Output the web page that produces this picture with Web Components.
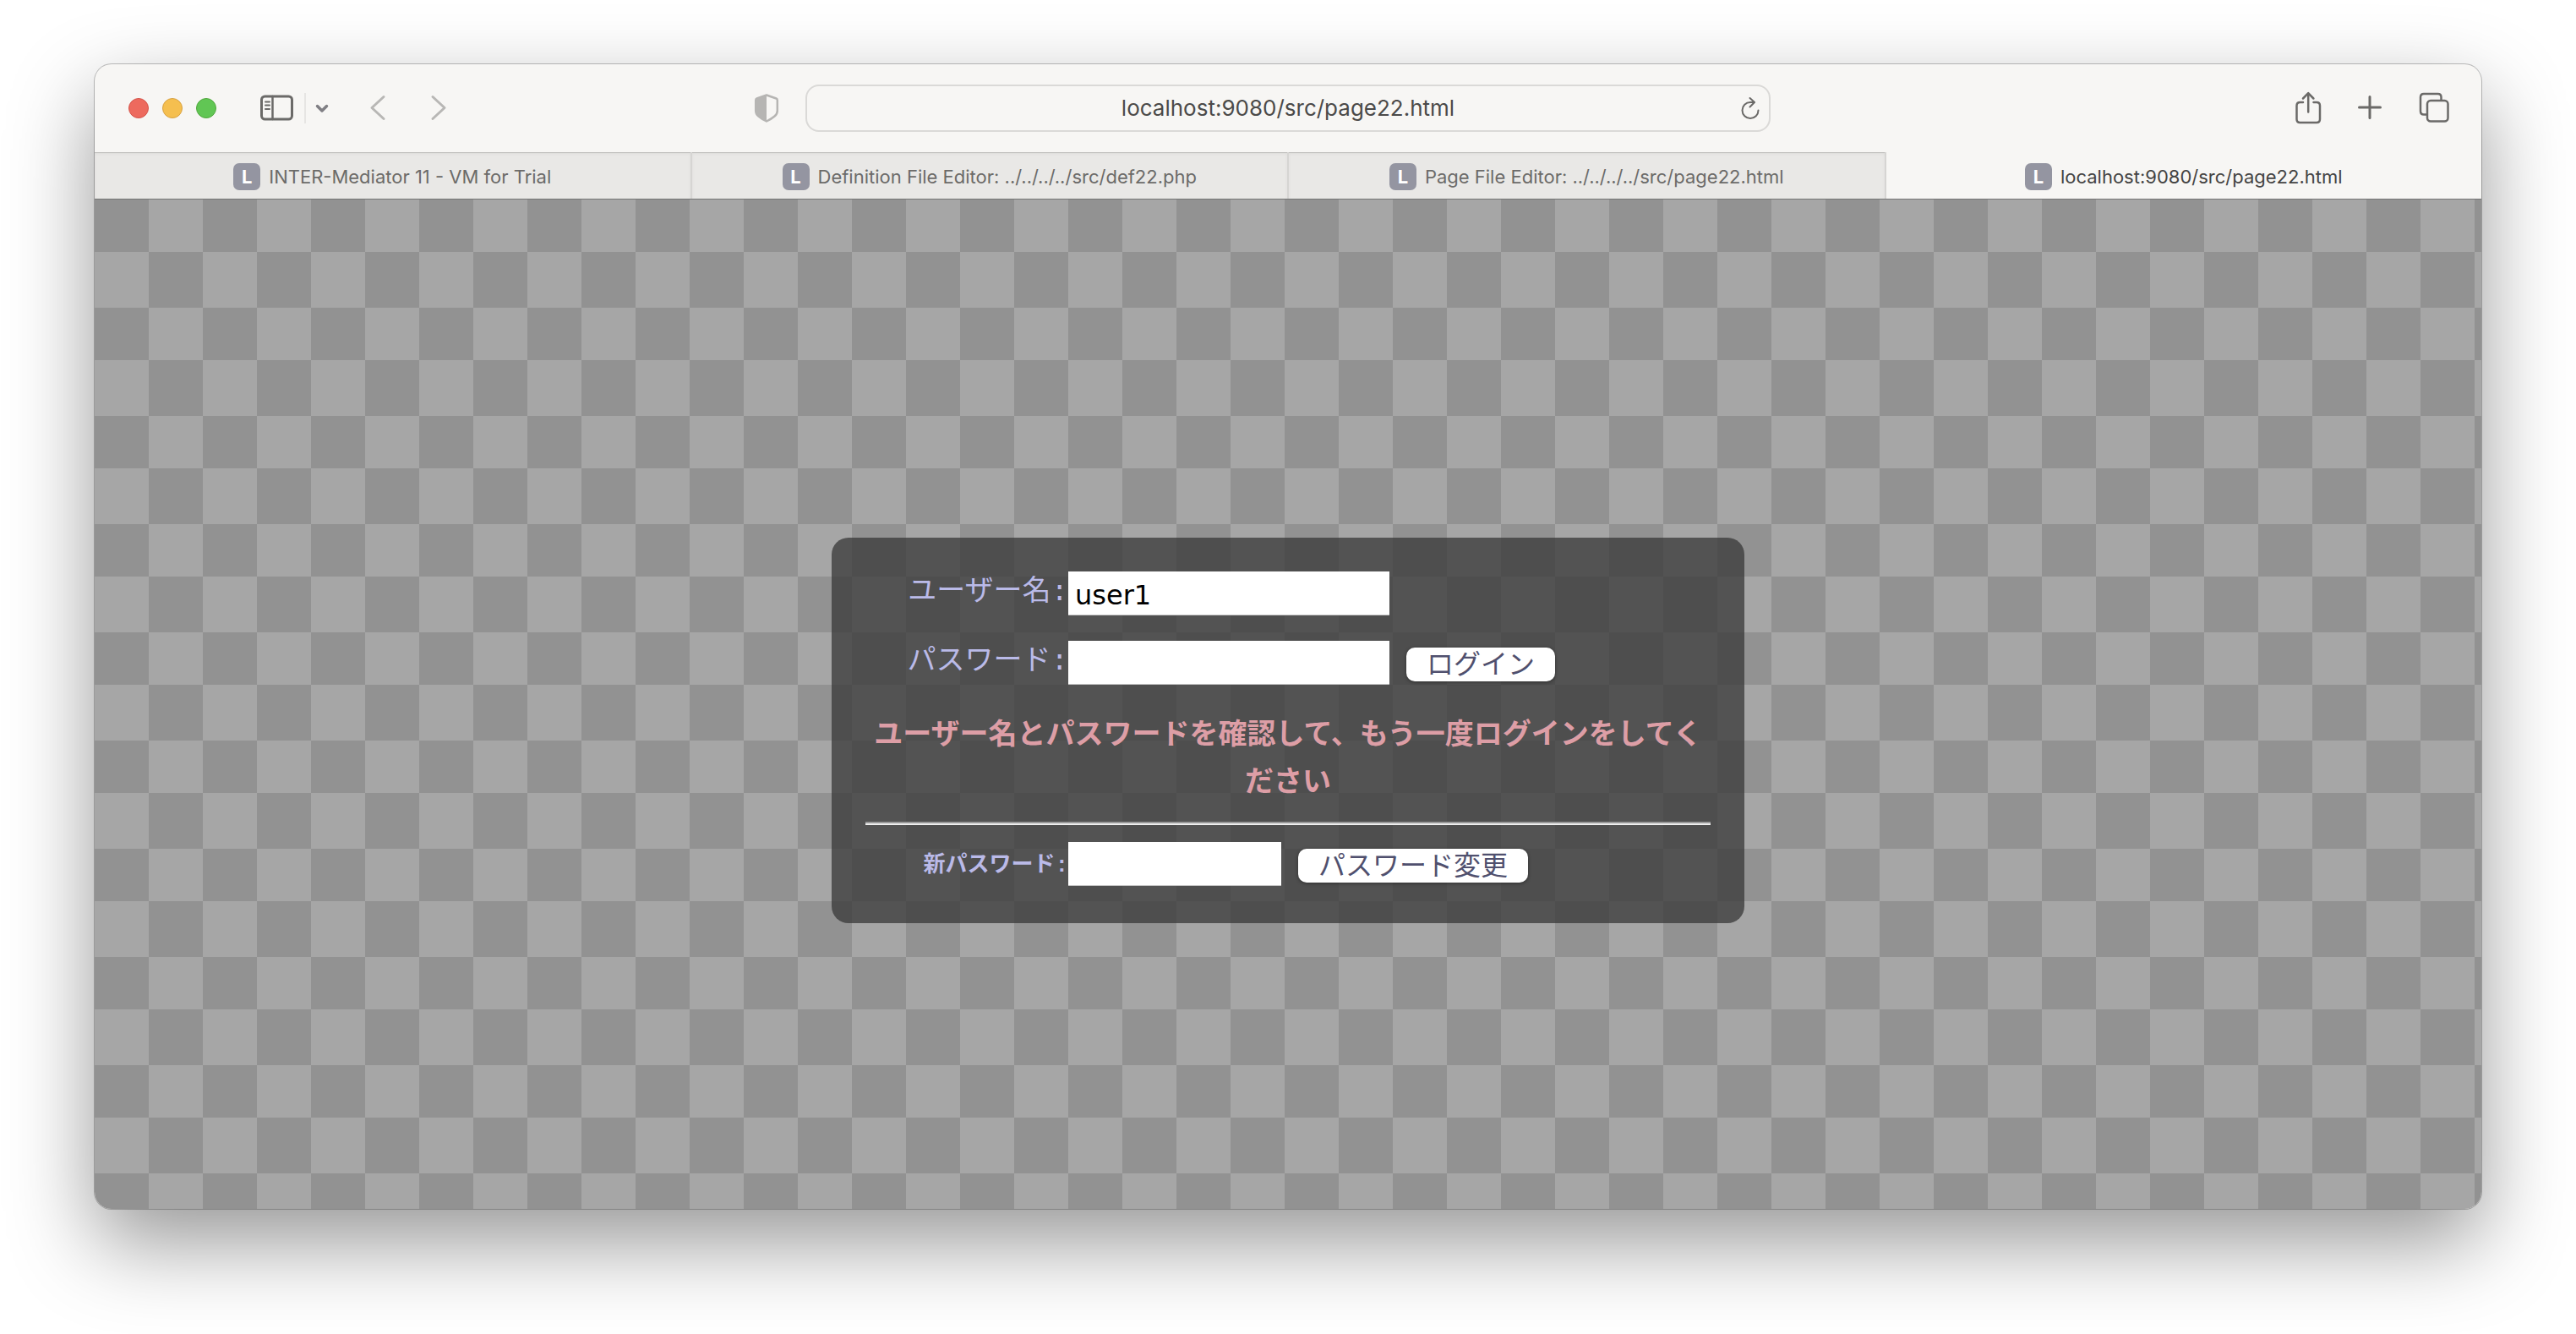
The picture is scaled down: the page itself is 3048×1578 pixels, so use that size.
<!DOCTYPE html>
<html lang="ja">
<head>
<meta charset="utf-8">
<title>localhost:9080/src/page22.html</title>
<style>
  html, body { margin: 0; background: #fff; }
  body {
    box-sizing: border-box;
    min-height: 100vh;
    padding: 76px 112px 148px;
    display: flex;
    font-family: Inter, "Noto Sans CJK JP", sans-serif;
  }
</style>
</head>
<body>
<browser-window>
  <browser-toolbar slot="toolbar" url="localhost:9080/src/page22.html"></browser-toolbar>
  <tab-strip slot="tabs">
    <browser-tab>INTER-Mediator 11 - VM for Trial</browser-tab>
    <browser-tab>Definition File Editor: ../../../../src/def22.php</browser-tab>
    <browser-tab>Page File Editor: ../../../../src/page22.html</browser-tab>
    <browser-tab active>localhost:9080/src/page22.html</browser-tab>
  </tab-strip>
  <login-panel>
    <field-row label="ユーザー名:" type="text" value="user1"></field-row>
    <field-row label="パスワード:" type="password"><panel-button>ログイン</panel-button></field-row>
    <span slot="message">ユーザー名とパスワードを確認して、もう一度ログインをしてください</span>
    <field-row slot="change" label="新パスワード:" type="password" compact><panel-button>パスワード変更</panel-button></field-row>
  </login-panel>
</browser-window>

<script>
class Base extends HTMLElement {
  connectedCallback() {
    if (!this.shadowRoot) this.attachShadow({ mode: "open" }).innerHTML = this.render();
  }
}

customElements.define("browser-window", class extends Base {
  render() {
    return `<style>
      :host {
        flex: 1; display: flex; flex-direction: column; overflow: hidden;
        border-radius: 20px; background: #f7f6f4;
        box-shadow: 0 0 0 1px rgba(0,0,0,.24), 0 40px 100px rgba(0,0,0,.41);
      }
      main {
        flex: 1; display: flex; align-items: center; justify-content: center;
        padding-top: 62px;
        background: conic-gradient(at 64px 62px, #a6a6a6 25%, #929292 0 50%, #a6a6a6 0 75%, #929292 0) 0 0 / 128px 128px;
      }
    </style>
    <slot name="toolbar"></slot>
    <slot name="tabs"></slot>
    <main><slot></slot></main>`;
  }
});

customElements.define("browser-toolbar", class extends Base {
  render() {
    return `<style>
      :host {
        display: grid; grid-template-columns: 1fr minmax(0, 1142px) 1fr;
        align-items: center; height: 104px; color: #6b6a68;
      }
      .side { display: flex; align-items: center; }
      .lights { display: flex; gap: 16px; padding-left: 40px; margin-right: 50px; }
      .lights i { box-sizing: border-box; width: 24px; height: 24px; border-radius: 50%; border: 1px solid; }
      .lights .red { background: #ed6a5e; border-color: #d5544a; }
      .lights .yellow { background: #f5bf4f; border-color: #d8a243; }
      .lights .green { background: #61c654; border-color: #51a73e; }
      button { all: unset; display: block; }
      svg { display: block; fill: none; stroke: currentColor; stroke-linecap: round; stroke-linejoin: round; }
      .rule { width: 2px; height: 36px; background: #e6e5e3; margin: 0 8px 0 10px; }
      .nav { color: #b8b7b5; }
      .group { color: #807f84; }
      .back { margin-left: 42px; }
      .forward { margin-left: 50px; }
      .shield { margin-left: auto; margin-right: 30px; color: #b6b5b3; }
      .address {
        box-sizing: border-box; height: 56px; border: 2px solid #dad9d7; border-radius: 16px;
        display: flex; align-items: center; padding: 0 10px 0 34px;
      }
      input {
        all: unset; flex: 1; min-width: 0; text-align: center;
        font-size: 26px; line-height: 32px; color: #4b4a49;
      }
      .right { justify-content: flex-end; gap: 40px; padding-right: 36px; }
    </style>
    <div class="side">
      <div class="lights"><i class="red"></i><i class="yellow"></i><i class="green"></i></div>
      <button aria-label="Sidebar"><svg width="44" height="34" viewBox="0 0 44 34" stroke-width="3">
        <rect x="3.500" y="3" width="36" height="27" rx="4"/><path d="M16.500 3v27" stroke-width="2.500"/>
        <path d="M8 9.500h5M8 13.500h5M8 18h5" stroke-width="2"/></svg></button>
      <span class="rule"></span>
      <button class="group" aria-label="Tab groups"><svg width="22" height="20" viewBox="0 0 22 20" stroke-width="3.500"><path d="M5.500 7.500l5.500 5.500 5.500-5.500"/></svg></button>
      <button class="nav back" aria-label="Back"><svg width="24" height="34" viewBox="0 0 24 34" stroke-width="3"><path d="M20 3.500L6 16.500l14 13"/></svg></button>
      <button class="nav forward" aria-label="Forward"><svg width="24" height="34" viewBox="0 0 24 34" stroke-width="3"><path d="M4 3.500l14 13-14 13"/></svg></button>
      <button class="shield" aria-label="Privacy report"><svg width="32" height="36" viewBox="0 0 32 36" stroke-width="2.500">
        <path d="M16 2.500L27.500 6.500Q28.800 7 28.800 8.500V21Q28.800 25 25.500 27.500Q22 30.500 16 33.500Q10 30.500 6.500 27.500Q3.200 25 3.200 21V8.500Q3.200 7 4.500 6.500Z"/>
        <path d="M16 2.500L4.500 6.500Q3.200 7 3.200 8.500V21Q3.200 25 6.500 27.500Q10 30.500 16 33.500Z" fill="currentColor" stroke="none"/></svg></button>
    </div>
    <div class="address">
      <input type="text" aria-label="Address" value="${this.getAttribute("url")}">
      <button aria-label="Reload"><svg width="24" height="30" viewBox="0 0 24 30" stroke-width="2">
        <path d="M21.500 17.500A9.500 9.500 0 1 1 12 8h4.500"/><path d="M11.500 3l5.500 5-5.500 5.500"/></svg></button>
    </div>
    <div class="side right">
      <button aria-label="Share"><svg width="34" height="42" viewBox="0 0 34 42" stroke-width="2.500">
        <path d="M11 14H7.500Q3.500 14 3.500 18V34Q3.500 38 7.500 38H27Q31 38 31 34V18Q31 14 27 14H23.500"/>
        <path d="M17.200 25.500V3.500M11 9.500l6.200-6.300 6.200 6.300"/></svg></button>
      <button aria-label="New tab"><svg width="32" height="34" viewBox="0 0 32 34" stroke-width="3"><path d="M16 3.500v25M3.500 16h25"/></svg></button>
      <button aria-label="Tab overview"><svg width="40" height="42" viewBox="0 0 40 42" stroke-width="2.500">
        <rect x="12" y="12" width="24.500" height="24.500" rx="4"/>
        <path d="M11 28.500H8Q4 28.500 4 24.500V8Q4 4 8 4H24.500Q28.500 4 28.500 8V11"/></svg></button>
    </div>`;
  }
});

customElements.define("tab-strip", class extends Base {
  render() {
    return `<style>
      :host { box-sizing: border-box; display: flex; height: 56px; border-bottom: 1px solid #747474; }
    </style><slot></slot>`;
  }
});

customElements.define("browser-tab", class extends Base {
  render() {
    return `<style>
      :host {
        flex: 1 1 0; min-width: 0; box-sizing: border-box;
        display: flex; align-items: center; justify-content: center;
        background: #e9e8e6; color: #6c6b69;
        border-right: 2px solid #d6d5d3;
        box-shadow: inset 0 1px 0 #c0bfbd, inset 0 2px 3px #dcdbd9;
      }
      :host([active]) { background: #f7f6f4; color: #454443; border-right: 0; box-shadow: none; }
      button { all: unset; display: flex; align-items: center; gap: 10px; padding-top: 2px; font-size: 22px; line-height: 32px; white-space: nowrap; }
      b {
        width: 32px; height: 32px; border-radius: 7px; background: #9495a1;
        color: #fff; font-size: 22px; text-align: center;
      }
    </style><button role="tab"><b>L</b><span><slot></slot></span></button>`;
  }
});

customElements.define("login-panel", class extends Base {
  render() {
    return `<style>
      :host {
        box-sizing: border-box; width: 1080px; max-width: 100%;
        padding: 40px 40px 44px; border-radius: 20px; background: rgba(55,55,55,.75);
      }
      form { display: block; margin: 0; }
      .rows { display: flex; flex-direction: column; gap: 30px; }
      p { margin: 30px 0 20px; color: #dd9ea6; font-weight: 700; font-size: 34px; line-height: 56px; text-align: center; }
      hr { box-sizing: border-box; height: 4px; margin: 0 0 20px; border: 0; border-top: 2px solid #9a9a9a; background: #eee; }
    </style>
    <form>
      <div class="rows"><slot></slot></div>
      <p role="alert"><slot name="message"></slot></p>
      <hr>
      <slot name="change"></slot>
    </form>`;
  }
});

customElements.define("field-row", class extends Base {
  render() {
    const a = n => this.getAttribute(n) || "";
    return `<style>
      :host { display: flex; align-items: flex-end; height: 52px; }
      label {
        align-self: flex-start; width: 240px; flex: none; text-align: right; white-space: nowrap;
        color: #babae8; font-family: "Liberation Mono", "Noto Sans CJK JP", monospace;
        font-size: 34px; line-height: 50px;
      }
      input {
        box-sizing: border-box; width: 380px; height: 52px; margin: 0 20px 0 0; padding: 4px 8px 0;
        border: 0; border-bottom: 1px solid #c4c4c4; border-radius: 0; outline: 0;
        background: #fff; color: #000; font: 32px "DejaVu Sans", sans-serif;
      }
      :host([compact]) label { font-weight: 700; font-size: 26px; line-height: 56px; }
      :host([compact]) input { width: 252px; }
    </style>
    <label for="field">${a("label")}</label><input id="field" type="${a("type")}" value="${a("value")}"><slot></slot>`;
  }
});

customElements.define("panel-button", class extends Base {
  render() {
    return `<style>
      :host { display: block; margin-bottom: 4px; }
      button {
        display: block; box-sizing: border-box; height: 40px; margin: 0; padding: 0 24px 6px; border: 0; border-radius: 10px;
        background: #fff; color: #50506e; font: 32px/34px "Noto Sans CJK JP", sans-serif;
        white-space: nowrap; box-shadow: 0 1px 4px rgba(0,0,0,.4);
      }
    </style><button type="button"><slot></slot></button>`;
  }
});
</script>
</body>
</html>
